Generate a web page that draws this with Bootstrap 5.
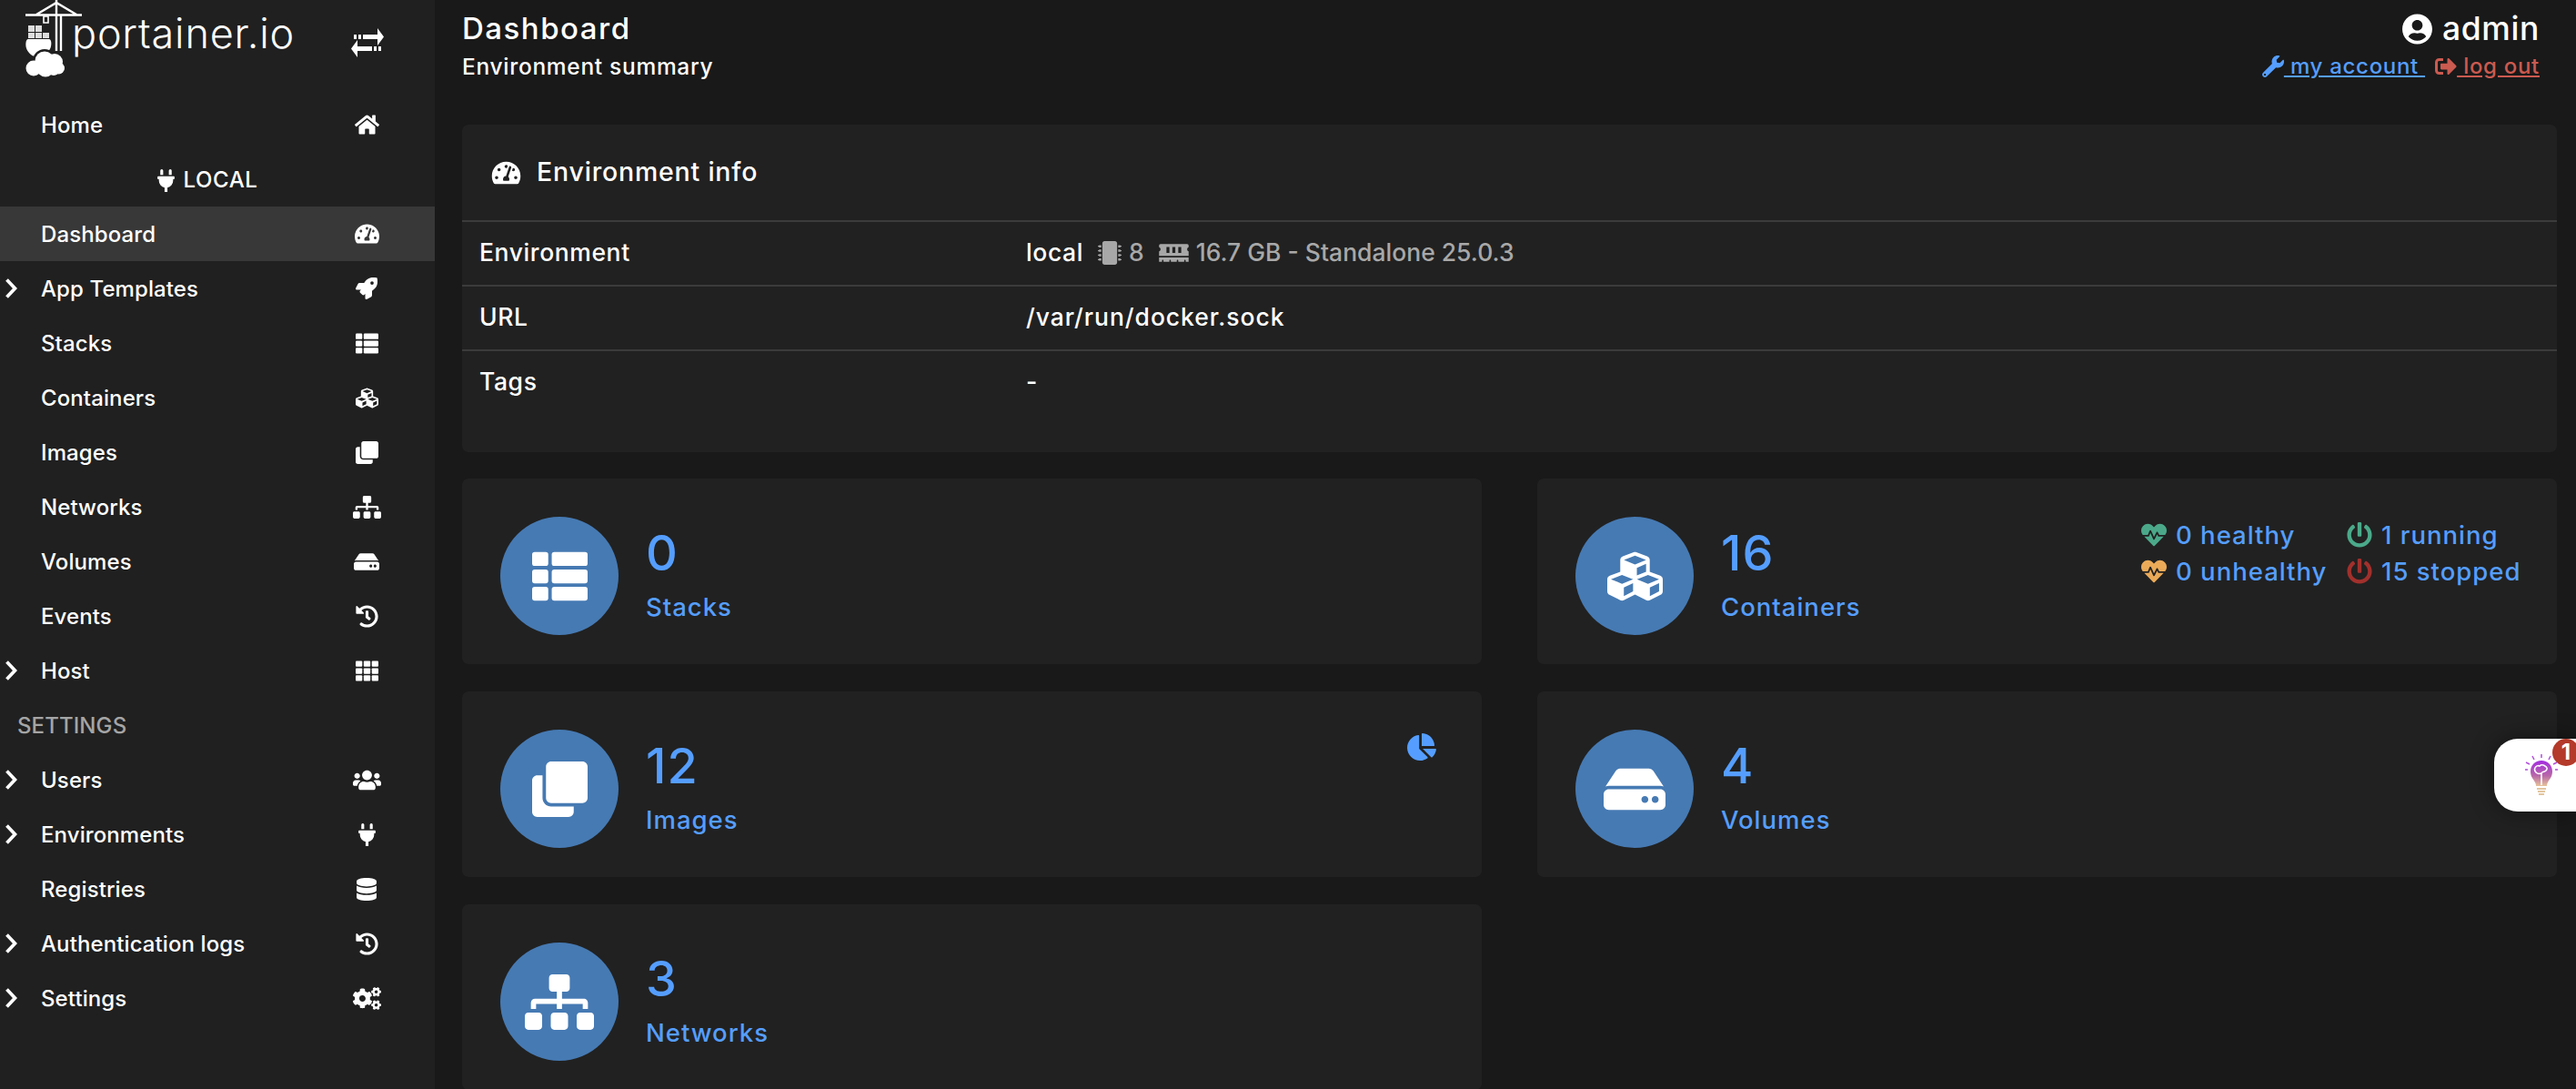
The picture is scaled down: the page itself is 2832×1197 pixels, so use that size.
<!DOCTYPE html>
<html>
<head>
  <meta charset="UTF-8">
  <title>Portainer</title>
  <link href="https://cdn.jsdelivr.net/npm/bootstrap@5.3.1/dist/css/bootstrap.min.css" rel="stylesheet">
  <style>
    html, body { height: 1197px; overflow: hidden; }
    body { background: #191919; color: #fff; font-family: "Inter", "Liberation Sans", sans-serif; font-weight: 500; font-size: 24px; letter-spacing: .6px; }
    svg { fill: currentColor; display: block; }
    .pt-sidebar { width: 478px; height: 1197px; background: #202020; flex: none; letter-spacing: .1px; }
    .pt-logo { height: 107px; }
    .pt-logo-svg { margin-left: 28px; flex: none; }
    .pt-logo-word { font-weight: 300; font-size: 45px; letter-spacing: .8px; color: #fff; line-height: 1; margin-left: -13px; margin-top: 14px; }
    .pt-row { height: 60px; display: flex; align-items: center; position: relative; color: #fff; padding-top: 2px; }
    .pt-row.active { background: #383838; }
    .pt-chev { width: 45px; padding-left: 5px; flex: none; margin-top: -2px; }
    .pt-ico { width: 32px; flex: none; margin-left: auto; margin-right: 59px; margin-top: -2px; display: flex; justify-content: center; }
    .pt-title { justify-content: center; padding-right: 22px; gap: 10px; letter-spacing: .6px; }
    .pt-section { padding-left: 19px; color: #a5a5a5; }
    .pt-main { flex: 1; min-width: 0; padding: 0 21px 0 30px; }
    .pt-head { height: 137px; padding-right: 19px; }
    .pt-h1 { font-size: 33px; line-height: 36px; padding-top: 13px; margin-bottom: 10px; letter-spacing: 1.5px; }
    .pt-sub { font-size: 24.5px; line-height: 28px; letter-spacing: .7px; }
    .pt-user { font-size: 35.5px; line-height: 36px; padding-top: 14px; margin-bottom: 9px; gap: 11px; }
    .pt-links { font-size: 24px; line-height: 28px; gap: 11px; letter-spacing: .7px; }
    .pt-links a { text-decoration: underline; display: flex; align-items: center; }
    .pt-blue { color: #559eff; }
    .pt-red { color: #cb5a50; }
    .pt-panel { background: #212121; border: 0; border-radius: 7px; color: #fff; }
    .pt-env { height: 360px; margin-bottom: 29px; }
    .pt-env-head { height: 105px; padding-left: 32px; font-size: 28.5px; letter-spacing: .8px; gap: 17px; }
    .pt-env-table { margin: 0; --bs-table-bg: transparent; --bs-table-color: #fff; border-color: #3b3b3b; font-size: 26.5px; }
    .pt-env-table td { height: 71px; padding: 0 0 2px 19px; vertical-align: middle; border-top: 2px solid #3b3b3b; border-bottom: 0; font-weight: 500; }
    .pt-env-table td:first-child { width: 601px; }
    .pt-url { letter-spacing: .95px; }
    .pt-muted { color: #a8a8a8; letter-spacing: 0; }
    .pt-grid { display: grid; grid-template-columns: 1121px 1121px; column-gap: 61px; row-gap: 30px; }
    .pt-stat { height: 204px; padding: 42px 0 0 42px; position: relative; }
    .pt-circle { width: 130px; height: 130px; border-radius: 50%; background: #467ab3; color: #fff; flex: none; }
    .pt-stat-text { margin-left: 30px; color: #559eff; }
    .pt-num { font-size: 54px; line-height: 60px; margin-top: 10px; margin-bottom: 12px; letter-spacing: 1px; }
    .pt-label { font-size: 27.5px; line-height: 34px; letter-spacing: 1px; }
    .pt-status { position: absolute; top: 42px; left: 664px; display: grid; grid-template-columns: 226px auto; font-size: 27.5px; line-height: 40px; color: #559eff; letter-spacing: 1px; }
    .pt-status > div { display: flex; align-items: center; gap: 10px; }
    .pt-green { color: #4ba98a; }
    .pt-orange { color: #eaaa58; }
    .pt-dark-red { color: #a1302c; }
    .pt-pie { position: absolute; top: 46px; right: 50px; color: #559eff; }
    .pt-tip { position: absolute; left: 2742px; top: 812px; width: 90px; height: 80px; background: #fff; border-radius: 26px 0 0 26px; box-shadow: 0 0 26px rgba(0,0,0,.45); }
    .pt-tip-bulb { position: absolute; left: 34px; top: 17px; }
    .pt-tip-badge { position: absolute; left: 64px; top: 0; width: 30px; height: 30px; border-radius: 50%; background: #b43a2a; color: #fff; font-size: 24px; font-weight: 700; line-height: 30px; text-align: center; letter-spacing: 0; }
  </style>
</head>
<body class="d-flex">
  <svg width="0" height="0" class="position-absolute">
    <symbol id="i-home" viewBox="0 0 576 512"><path d="M280.37 148.26L96 300.11V464a16 16 0 0 0 16 16l112.06-.29a16 16 0 0 0 15.92-16V368a16 16 0 0 1 16-16h64a16 16 0 0 1 16 16v95.64a16 16 0 0 0 16 16.05L464 480a16 16 0 0 0 16-16V300L295.67 148.26a12.19 12.19 0 0 0-15.3 0zM571.6 251.47L488 182.56V44.05a12 12 0 0 0-12-12h-56a12 12 0 0 0-12 12v72.61L318.47 43a48 48 0 0 0-61 0L4.34 251.47a12 12 0 0 0-1.6 16.9l25.5 31A12 12 0 0 0 45.15 301l235.22-193.74a12.19 12.19 0 0 1 15.3 0L530.9 301a12 12 0 0 0 16.9-1.6l25.5-31a12 12 0 0 0-1.7-16.93z"/></symbol>
    <symbol id="i-gauge" viewBox="0 0 576 512"><path d="M288 32C128.94 32 0 160.94 0 320c0 52.8 14.25 102.26 39.06 144.8 5.61 9.62 16.3 15.2 27.44 15.2h443c11.14 0 21.83-5.58 27.44-15.2C561.75 422.26 576 372.8 576 320c0-159.06-128.94-288-288-288zm0 64c14.71 0 26.58 10.13 30.32 23.65-1.11 2.26-2.64 4.23-3.45 6.67l-9.22 27.67c-5.13 3.49-10.97 6.01-17.64 6.01-17.67 0-32-14.33-32-32S270.33 96 288 96zM96 384c-17.67 0-32-14.33-32-32s14.33-32 32-32 32 14.33 32 32-14.33 32-32 32zm48-160c-17.67 0-32-14.33-32-32s14.33-32 32-32 32 14.33 32 32-14.33 32-32 32zm246.77-72.41l-61.33 184C343.13 347.33 352 364.54 352 384c0 11.72-3.38 22.55-8.88 32H232.88c-5.5-9.45-8.88-20.28-8.88-32 0-33.94 26.5-61.43 59.9-63.59l61.34-184.01c4.17-12.56 17.73-19.45 30.36-15.17 12.57 4.19 19.35 17.79 15.17 30.36zm14.66 57.2l15.52-46.55c3.47-1.29 7.13-2.23 11.05-2.23 17.67 0 32 14.33 32 32s-14.33 32-32 32c-11.38-.01-20.89-6.28-26.57-15.22zM480 384c-17.67 0-32-14.33-32-32s14.33-32 32-32 32 14.33 32 32-14.33 32-32 32z"/></symbol>
    <symbol id="i-rocket" viewBox="0 0 512 512"><path d="M505.12019,19.09375c-1.18945-5.53125-6.65819-11-12.207-12.1875C460.716,0,435.507,0,410.40747,0,307.17523,0,245.26909,55.20312,199.05238,128H94.83772c-16.34763.01562-35.55658,11.875-42.88664,26.48438L2.51562,253.29688A28.4,28.4,0,0,0,0,264a24.00867,24.00867,0,0,0,24.00582,24H127.81618l-22.47457,22.46875c-11.36521,11.36133-12.99607,32.25781,0,45.25L156.24582,406.625c11.15623,11.1875,32.15619,13.15625,45.27726,0l22.47457-22.46875V488a24.00867,24.00867,0,0,0,24.00581,24,28.55934,28.55934,0,0,0,10.707-2.51562l98.72834-49.39063c14.62888-7.29687,26.50776-26.5,26.50776-42.85937V312.79688c72.59753-46.3125,128.03493-108.40626,128.03493-211.09376C512.07526,76.5,512.07526,51.29688,505.12019,19.09375ZM384.04033,168A40,40,0,1,1,424.05,128,40.02322,40.02322,0,0,1,384.04033,168Z"/></symbol>
    <symbol id="i-list" viewBox="0 0 512 512"><rect y="32" width="149" height="128" rx="24"/><rect y="192" width="149" height="128" rx="24"/><rect y="352" width="149" height="128" rx="24"/><rect x="181" y="32" width="331" height="128" rx="24"/><rect x="181" y="192" width="331" height="128" rx="24"/><rect x="181" y="352" width="331" height="128" rx="24"/></symbol>
    <symbol id="i-cubes" viewBox="0 0 512 512"><path d="M488.6 250.2L392 214V105.5c0-15-9.3-28.4-23.4-33.7l-100-37.5c-8.1-3.1-17.1-3.1-25.3 0l-100 37.5c-14.1 5.3-23.4 18.7-23.4 33.7V214l-96.6 36.2C9.3 255.5 0 268.9 0 283.9V394c0 13.6 7.7 26.1 19.9 32.2l100 50c10.1 5.1 22.1 5.1 32.2 0l103.9-52 103.9 52c10.1 5.1 22.1 5.1 32.2 0l100-50c12.2-6.1 19.9-18.6 19.9-32.2V283.9c0-15-9.3-28.4-23.4-33.7zM358 214.8l-85 31.9v-68.2l85-37v73.3zM154 104.1l102-38.2 102 38.2v.6l-102 41.4-102-41.4v-.6zm84 291.1l-85 42.5v-79.1l85-38.8v75.4zm0-112l-102 41.4-102-41.4v-.6l102-38.2 102 38.2v.6zm240 112l-85 42.5v-79.1l85-38.8v75.4zm0-112l-102 41.4-102-41.4v-.6l102-38.2 102 38.2v.6z"/></symbol>
    <symbol id="i-clone" viewBox="0 0 512 512"><path d="M464 0c26.51 0 48 21.49 48 48v288c0 26.51-21.49 48-48 48H176c-26.51 0-48-21.49-48-48V48c0-26.51 21.49-48 48-48h288M176 416c-44.112 0-80-35.888-80-80V128H48c-26.51 0-48 21.49-48 48v288c0 26.51 21.49 48 48 48h288c26.51 0 48-21.49 48-48v-48H176z"/></symbol>
    <symbol id="i-sitemap" viewBox="0 0 640 512"><path d="M128 352H32c-17.67 0-32 14.33-32 32v96c0 17.67 14.33 32 32 32h96c17.67 0 32-14.33 32-32v-96c0-17.67-14.33-32-32-32zm-24-80h192v48h48v-48h192v48h48v-57.59c0-21.17-17.23-38.41-38.41-38.41H344v-64h40c17.67 0 32-14.33 32-32V32c0-17.67-14.33-32-32-32H256c-17.67 0-32 14.33-32 32v96c0 17.67 14.33 32 32 32h40v64H94.41C73.23 224 56 241.23 56 262.41V320h48v-48zm264 80h-96c-17.67 0-32 14.33-32 32v96c0 17.67 14.33 32 32 32h96c17.67 0 32-14.33 32-32v-96c0-17.67-14.33-32-32-32zm240 0h-96c-17.67 0-32 14.33-32 32v96c0 17.67 14.33 32 32 32h96c17.67 0 32-14.33 32-32v-96c0-17.67-14.33-32-32-32z"/></symbol>
    <symbol id="i-hdd" viewBox="0 0 576 512"><path d="M576 304v96c0 26.51-21.49 48-48 48H48c-26.51 0-48-21.49-48-48v-96c0-26.51 21.49-48 48-48h480c26.51 0 48 21.49 48 48zm-48-80a79.557 79.557 0 0 1 30.777 6.165L462.25 85.374A48.003 48.003 0 0 0 422.311 64H153.689a48 48 0 0 0-39.938 21.374L17.223 230.165A79.557 79.557 0 0 1 48 224h480zm-48 96c-17.673 0-32 14.327-32 32s14.327 32 32 32 32-14.327 32-32-14.327-32-32-32zm-96 0c-17.673 0-32 14.327-32 32s14.327 32 32 32 32-14.327 32-32-14.327-32-32-32z"/></symbol>
    <symbol id="i-history" viewBox="0 0 512 512"><path d="M504 255.531c.253 136.64-111.18 248.372-247.82 248.468-59.015.042-113.223-20.53-155.822-54.911-11.077-8.94-11.905-25.541-1.839-35.607l11.267-11.267c8.609-8.609 22.353-9.551 31.891-1.984C173.062 425.135 212.781 440 256 440c101.705 0 184-82.311 184-184 0-101.705-82.311-184-184-184-48.814 0-93.149 18.969-126.068 49.932l50.754 50.754c10.08 10.08 2.941 27.314-11.313 27.314H24c-8.837 0-16-7.163-16-16V38.627c0-14.254 17.234-21.393 27.314-11.314l49.372 49.372C129.209 34.136 189.552 8 256 8c136.81 0 247.747 110.78 248 247.531zm-180.912 78.784l9.823-12.63c8.138-10.463 6.253-25.542-4.21-33.679L288 256.349V152c0-13.255-10.745-24-24-24h-16c-13.255 0-24 10.745-24 24v135.651l65.409 50.874c10.463 8.137 25.541 6.253 33.679-4.21z"/></symbol>
    <symbol id="i-th" viewBox="0 0 512 512"><rect y="32" width="149" height="128" rx="20"/><rect x="181" y="32" width="150" height="128" rx="20"/><rect x="363" y="32" width="149" height="128" rx="20"/><rect y="192" width="149" height="128" rx="20"/><rect x="181" y="192" width="150" height="128" rx="20"/><rect x="363" y="192" width="149" height="128" rx="20"/><rect y="352" width="149" height="128" rx="20"/><rect x="181" y="352" width="150" height="128" rx="20"/><rect x="363" y="352" width="149" height="128" rx="20"/></symbol>
    <symbol id="i-users" viewBox="0 0 640 512"><path d="M96 224c35.3 0 64-28.7 64-64s-28.7-64-64-64-64 28.7-64 64 28.7 64 64 64zm448 0c35.3 0 64-28.7 64-64s-28.7-64-64-64-64 28.7-64 64 28.7 64 64 64zm32 32h-64c-17.6 0-33.5 7.1-45.1 18.6 40.3 22.1 68.9 62 75.1 109.4h66c17.7 0 32-14.3 32-32v-32c0-35.3-28.7-64-64-64zm-256 0c61.9 0 112-50.1 112-112S381.9 32 320 32 208 82.1 208 144s50.1 112 112 112zm76.8 32h-8.3c-20.8 10-43.9 16-68.5 16s-47.6-6-68.5-16h-8.3C179.6 288 128 339.6 128 403.2V432c0 26.5 21.5 48 48 48h288c26.5 0 48-21.5 48-48v-28.8c0-63.6-51.6-115.2-115.2-115.2zm-223.7-13.4C161.5 263.1 145.6 256 128 256H64c-35.3 0-64 28.7-64 64v32c0 17.7 14.3 32 32 32h65.9c6.3-47.4 34.9-87.3 75.2-109.4z"/></symbol>
    <symbol id="i-plug" viewBox="0 0 384 512"><path d="M320,32a32,32,0,0,0-64,0v96h64Zm48,128H16A16,16,0,0,0,0,176v32a16,16,0,0,0,16,16H32v32A160.07,160.07,0,0,0,160,412.8V512h64V412.8A160.07,160.07,0,0,0,352,256V224h16a16,16,0,0,0,16-16V176A16,16,0,0,0,368,160ZM128,32a32,32,0,0,0-64,0v96h64Z"/></symbol>
    <symbol id="i-db" viewBox="0 0 448 512"><path d="M448 73.143v45.714C448 159.143 347.667 192 224 192S0 159.143 0 118.857V73.143C0 32.857 100.333 0 224 0s224 32.857 224 73.143zM448 176v102.857C448 319.143 347.667 352 224 352S0 319.143 0 278.857V176c48.125 33.143 136.208 48.572 224 48.572S399.874 209.143 448 176zm0 160v102.857C448 479.143 347.667 512 224 512S0 479.143 0 438.857V336c48.125 33.143 136.208 48.572 224 48.572S399.874 369.143 448 336z"/></symbol>
    <symbol id="i-cogs" viewBox="0 0 640 512"><path d="M512.1 191l-8.2 14.3c-3 5.3-9.4 7.5-15.1 5.4-11.8-4.4-22.6-10.7-32.1-18.6-4.6-3.8-5.8-10.5-2.8-15.7l8.2-14.3c-6.9-8-12.3-17.3-15.9-27.4h-16.5c-6 0-11.2-4.3-12.2-10.3-2-12-2.1-24.6 0-37.1 1-6 6.2-10.4 12.2-10.4h16.5c3.6-10.1 9-19.4 15.9-27.4l-8.2-14.3c-3-5.2-1.9-11.9 2.8-15.7 9.5-7.9 20.4-14.2 32.1-18.6 5.7-2.1 12.1.1 15.1 5.4l8.2 14.3c10.5-1.9 21.2-1.9 31.7 0L552 6.3c3-5.3 9.4-7.5 15.1-5.4 11.8 4.4 22.6 10.7 32.1 18.6 4.6 3.8 5.8 10.5 2.8 15.7l-8.2 14.3c6.9 8 12.3 17.3 15.9 27.4h16.5c6 0 11.2 4.3 12.2 10.3 2 12 2.1 24.6 0 37.1-1 6-6.2 10.4-12.2 10.4h-16.5c-3.6 10.1-9 19.4-15.9 27.4l8.2 14.3c3 5.2 1.9 11.9-2.8 15.7-9.5 7.9-20.4 14.2-32.1 18.6-5.7 2.1-12.1-.1-15.1-5.4l-8.2-14.3c-10.4 1.9-21.2 1.9-31.7 0zm-10.5-58.8c38.5 29.6 82.4-14.3 52.8-52.8-38.5-29.7-82.4 14.3-52.8 52.8zM386.3 286.1l33.7 16.8c10.1 5.8 14.5 18.1 10.5 29.1-8.9 24.2-26.4 46.4-42.6 65.8-7.4 8.9-20.2 11.1-30.3 5.3l-29.1-16.8c-16 13.7-34.6 24.6-54.9 31.7v33.6c0 11.6-8.3 21.6-19.7 23.6-24.6 4.2-50.4 4.4-75.9 0-11.5-2-20-11.9-20-23.6V418c-20.3-7.2-38.9-18-54.9-31.7L74 403c-10 5.8-22.9 3.6-30.3-5.3-16.2-19.4-33.3-41.6-42.2-65.7-4-10.9.4-23.2 10.5-29.1l33.3-16.8c-3.9-20.9-3.9-42.4 0-63.4L12 205.8c-10.1-5.8-14.6-18.1-10.5-29 8.9-24.2 26-46.4 42.2-65.8 7.4-8.9 20.2-11.1 30.3-5.3l29.1 16.8c16-13.7 34.6-24.6 54.9-31.7V57.1c0-11.5 8.2-21.5 19.6-23.5 24.6-4.2 50.5-4.4 76-.1 11.5 2 20 11.9 20 23.6v33.6c20.3 7.2 38.9 18 54.9 31.7l29.1-16.8c10-5.8 22.9-3.6 30.3 5.3 16.2 19.4 33.2 41.6 42.1 65.8 4 10.9.1 23.2-10 29.1l-33.7 16.8c3.9 21 3.9 42.5 0 63.5zm-117.6 21.1c59.2-77-28.7-164.9-105.7-105.7-59.2 77 28.7 164.9 105.7 105.7zm243.4 182.7l-8.2 14.3c-3 5.3-9.4 7.5-15.1 5.4-11.8-4.4-22.6-10.7-32.1-18.6-4.6-3.8-5.8-10.5-2.8-15.7l8.2-14.3c-6.9-8-12.3-17.3-15.9-27.4h-16.5c-6 0-11.2-4.3-12.2-10.3-2-12-2.1-24.6 0-37.1 1-6 6.2-10.4 12.2-10.4h16.5c3.6-10.1 9-19.4 15.9-27.4l-8.2-14.3c-3-5.2-1.9-11.9 2.8-15.7 9.5-7.9 20.4-14.2 32.1-18.6 5.7-2.1 12.1.1 15.1 5.4l8.2 14.3c10.5-1.9 21.2-1.9 31.7 0l8.2-14.3c3-5.3 9.4-7.5 15.1-5.4 11.8 4.4 22.6 10.7 32.1 18.6 4.6 3.8 5.8 10.5 2.8 15.7l-8.2 14.3c6.9 8 12.3 17.3 15.9 27.4h16.5c6 0 11.2 4.3 12.2 10.3 2 12 2.1 24.6 0 37.1-1 6-6.2 10.4-12.2 10.4h-16.5c-3.6 10.1-9 19.4-15.9 27.4l8.2 14.3c3 5.2 1.9 11.9-2.8 15.7-9.5 7.9-20.4 14.2-32.1 18.6-5.7 2.1-12.1-.1-15.1-5.4l-8.2-14.3c-10.4 1.9-21.2 1.9-31.7 0zM501.6 431c38.5 29.6 82.4-14.3 52.8-52.8-38.5-29.6-82.4 14.3-52.8 52.8z"/></symbol>
    <symbol id="i-chev" viewBox="0 0 14 24"><path d="M2.5 2.5 L11.5 12 L2.5 21.5" fill="none" stroke="currentColor" stroke-width="3.8"/></symbol>
    <symbol id="i-heart" viewBox="0 0 512 512"><path d="M320.2 243.8l-49.7 99.4c-6 12.1-23.4 11.7-28.9-.6l-56.9-126.3-30 71.7H60.6l182.5 186.5c7.1 7.3 18.6 7.3 25.7 0L451.4 288H342.3l-22.1-44.2zM473.7 73.9l-2.4-2.5c-51.5-52.6-135.8-52.6-187.4 0L256 100l-27.9-28.5c-51.5-52.7-135.9-52.7-187.4 0l-2.4 2.4C-10.4 123.7-12.5 203 31 256h102.4l35.9-86.2c5.4-12.9 23.6-13.2 29.4-.4l58.2 129.3 49-97.9c5.9-11.8 22.7-11.8 28.6 0l27.6 55.2H481c43.5-53 41.4-132.3-7.3-182.1z"/></symbol>
    <symbol id="i-power" viewBox="0 0 512 512"><path d="M400 54.1c63 45 104 118.6 104 201.9 0 136.8-110.8 247.7-247.5 248C120 504.3 8.2 393 8 256.4 7.9 173.1 48.9 99.3 111.8 54.2c11.7-8.3 28-4.8 35 7.7L162.6 90c5.9 10.5 3.1 23.8-6.6 31-41.5 30.8-68 79.6-68 134.9-.1 92.3 74.5 168.1 168 168.1 91.6 0 168.6-74.2 168-169.1-.3-51.8-24.7-101.8-68.1-134-9.7-7.2-12.4-20.5-6.5-30.9l15.8-28.1c7-12.4 23.2-16.1 34.8-7.8zM296 264V24c0-13.3-10.7-24-24-24h-32c-13.3 0-24 10.7-24 24v240c0 13.3 10.7 24 24 24h32c13.3 0 24-10.7 24-24z"/></symbol>
    <symbol id="i-pie" viewBox="0 0 544 512"><path d="M527.79 288H290.5l158.03 158.03c6.04 6.04 15.98 6.53 22.19.68 38.7-36.46 65.32-85.61 73.13-140.86 1.34-9.46-6.51-17.85-16.06-17.85zm-15.83-64.8C503.72 103.74 408.26 8.28 288.8.04 279.68-.59 272 7.1 272 16.24V240h223.77c9.14 0 16.82-7.68 16.19-16.8zM224 288V50.71c0-9.55-8.39-17.4-17.84-16.06C86.99 51.49-4.1 155.6.14 280.37 4.5 408.51 114.83 513.59 243.03 511.98c50.4-.63 96.97-16.87 135.26-44.03 7.9-5.6 8.42-17.23 1.57-24.08L224 288z"/></symbol>
    <symbol id="i-wrench" viewBox="0 0 512 512"><path d="M507.73 109.1c-2.24-9.03-13.54-12.09-20.12-5.51l-74.36 74.36-67.88-11.31-11.31-67.88 74.36-74.36c6.62-6.62 3.43-17.9-5.66-20.16-47.38-11.74-99.55.91-136.58 37.93-39.64 39.64-50.55 97.1-34.05 147.2L18.74 402.76c-24.99 24.99-24.99 65.51 0 90.5 24.99 24.99 65.51 24.99 90.5 0l213.21-213.21c50.12 16.71 107.47 5.68 147.37-34.22 37.07-37.07 49.7-89.32 37.91-136.73zM64 472c-13.25 0-24-10.75-24-24 0-13.26 10.75-24 24-24s24 10.74 24 24c0 13.25-10.75 24-24 24z"/></symbol>
    <symbol id="i-user" viewBox="0 0 496 512"><path d="M248 8C111 8 0 119 0 256s111 248 248 248 248-111 248-248S385 8 248 8zm0 96c48.6 0 88 39.4 88 88s-39.4 88-88 88-88-39.4-88-88 39.4-88 88-88zm0 344c-58.7 0-111.3-26.6-146.5-68.2 18.8-35.4 55.6-59.8 98.5-59.8 2.4 0 4.8.4 7.1 1.1 13 4.2 26.6 6.9 40.9 6.9 14.3 0 28-2.7 40.9-6.9 2.3-.7 4.7-1.1 7.1-1.1 42.9 0 79.7 24.4 98.5 59.8C359.3 421.4 306.7 448 248 448z"/></symbol>
    <symbol id="i-out" viewBox="0 0 512 512"><path d="M497 273L329 441c-15 15-41 4.5-41-17v-96H152c-13.3 0-24-10.7-24-24v-96c0-13.3 10.7-24 24-24h136V88c0-21.4 25.9-32 41-17l168 168c9.3 9.4 9.3 24.6 0 34zM192 436v-40c0-6.6-5.4-12-12-12H96c-17.7 0-32-14.3-32-32V160c0-17.7 14.3-32 32-32h84c6.6 0 12-5.4 12-12V76c0-6.6-5.4-12-12-12H96c-53 0-96 43-96 96v192c0 53 43 96 96 96h84c6.6 0 12-5.4 12-12z"/></symbol>
    <symbol id="i-chip" viewBox="0 0 512 512"><path d="M416 48v416c0 26.51-21.49 48-48 48H144c-26.51 0-48-21.49-48-48V48c0-26.51 21.49-48 48-48h224c26.51 0 48 21.49 48 48zm96 58v12a6 6 0 0 1-6 6h-18v6a6 6 0 0 1-6 6h-42V88h42a6 6 0 0 1 6 6v6h18a6 6 0 0 1 6 6zm0 96v12a6 6 0 0 1-6 6h-18v6a6 6 0 0 1-6 6h-42v-48h42a6 6 0 0 1 6 6v6h18a6 6 0 0 1 6 6zm0 96v12a6 6 0 0 1-6 6h-18v6a6 6 0 0 1-6 6h-42v-48h42a6 6 0 0 1 6 6v6h18a6 6 0 0 1 6 6zm0 96v12a6 6 0 0 1-6 6h-18v6a6 6 0 0 1-6 6h-42v-48h42a6 6 0 0 1 6 6v6h18a6 6 0 0 1 6 6zM30 376h42v48H30a6 6 0 0 1-6-6v-6H6a6 6 0 0 1-6-6v-12a6 6 0 0 1 6-6h18v-6a6 6 0 0 1 6-6zm0-96h42v48H30a6 6 0 0 1-6-6v-6H6a6 6 0 0 1-6-6v-12a6 6 0 0 1 6-6h18v-6a6 6 0 0 1 6-6zm0-96h42v48H30a6 6 0 0 1-6-6v-6H6a6 6 0 0 1-6-6v-12a6 6 0 0 1 6-6h18v-6a6 6 0 0 1 6-6zm0-96h42v48H30a6 6 0 0 1-6-6v-6H6a6 6 0 0 1-6-6v-12a6 6 0 0 1 6-6h18v-6a6 6 0 0 1 6-6z"/></symbol>
    <symbol id="i-memory" viewBox="0 0 640 512"><path d="M640 130.94V96c0-17.67-14.33-32-32-32H32C14.33 64 0 78.33 0 96v34.94c18.6 6.61 32 24.19 32 45.06s-13.4 38.45-32 45.06V320h640v-98.94c-18.6-6.61-32-24.19-32-45.06s13.4-38.45 32-45.06zM224 256h-64V128h64v128zm128 0h-64V128h64v128zm128 0h-64V128h64v128zM0 448h64v-26.67c0-8.84 7.16-16 16-16s16 7.16 16 16V448h128v-26.67c0-8.84 7.16-16 16-16s16 7.16 16 16V448h128v-26.67c0-8.84 7.16-16 16-16s16 7.16 16 16V448h128v-26.67c0-8.84 7.16-16 16-16s16 7.16 16 16V448h64v-96H0v96z"/></symbol>
  </svg>

  <div class="pt-sidebar">
    <div class="pt-logo d-flex align-items-start position-relative">
      <svg class="pt-logo-svg" width="64" height="86" viewBox="0 0 64 86">
        <path d="M0 16.500H62M12 16L34 3L56 16M34 0V56M39 17V56" fill="none" stroke="#fff" stroke-width="2.400"/>
        <path d="M3 28h7v7H3zM11 28h7v7h-7zM3 36h7v6H3zM11 36h7v6h-7zM19 36h7v6h-7z" fill="#ddd"/>
        <path d="M20 18h5v7h-5z" fill="none" stroke="#fff" stroke-width="1.600"/>
        <path d="M3 43h23c2 0 3 4 2 8 -1 5-5 7-9 7 -3 0-6 3-8 4 -4 0-9-5-10-9 -1-3-1-10 2-10z" fill="#fff"/>
        <g fill="#202020"><circle cx="10" cy="75" r="11"/><circle cx="21" cy="67" r="13"/><circle cx="33" cy="68" r="11"/></g>
        <g fill="#fff"><circle cx="9" cy="75" r="8.500"/><circle cx="21" cy="67" r="10.500"/><circle cx="32" cy="68" r="9"/><circle cx="36.500" cy="75" r="6.500"/><circle cx="22" cy="75" r="9.500"/><circle cx="31" cy="77" r="6"/></g>
      </svg>
      <span class="pt-logo-word">portainer.io</span>
      <span class="position-absolute" style="left:386px;top:31px">
        <svg width="36" height="32" viewBox="0 0 36 32"><path d="M3 7h3v5H3zM8 7h3v5H8zM13 7h16V0l7 9.500-7 9.500v-7H13z"/><path d="M33 20h-3v5h3zM28 20h-3v5h3zM23 20H7v-7L0 22.500 7 32v-7h16z"/></svg>
      </span>
    </div>

    <div class="pt-row"><span class="pt-chev"></span>Home<span class="pt-ico"><svg width="27" height="24"><use href="#i-home"/></svg></span></div>
    <div class="pt-row pt-title"><svg width="19" height="25"><use href="#i-plug"/></svg>LOCAL</div>
    <div class="pt-row active"><span class="pt-chev"></span>Dashboard<span class="pt-ico"><svg width="27" height="24"><use href="#i-gauge"/></svg></span></div>
    <div class="pt-row"><span class="pt-chev"><svg width="14" height="24"><use href="#i-chev"/></svg></span>App Templates<span class="pt-ico"><svg width="24" height="24"><use href="#i-rocket"/></svg></span></div>
    <div class="pt-row"><span class="pt-chev"></span>Stacks<span class="pt-ico"><svg width="25" height="25"><use href="#i-list"/></svg></span></div>
    <div class="pt-row"><span class="pt-chev"></span>Containers<span class="pt-ico"><svg width="25" height="25"><use href="#i-cubes"/></svg></span></div>
    <div class="pt-row"><span class="pt-chev"></span>Images<span class="pt-ico"><svg width="25" height="25"><use href="#i-clone"/></svg></span></div>
    <div class="pt-row"><span class="pt-chev"></span>Networks<span class="pt-ico"><svg width="31" height="25"><use href="#i-sitemap"/></svg></span></div>
    <div class="pt-row"><span class="pt-chev"></span>Volumes<span class="pt-ico"><svg width="28" height="25"><use href="#i-hdd"/></svg></span></div>
    <div class="pt-row"><span class="pt-chev"></span>Events<span class="pt-ico"><svg width="25" height="25"><use href="#i-history"/></svg></span></div>
    <div class="pt-row"><span class="pt-chev"><svg width="14" height="24"><use href="#i-chev"/></svg></span>Host<span class="pt-ico"><svg width="25" height="25"><use href="#i-th"/></svg></span></div>
    <div class="pt-row pt-section">SETTINGS</div>
    <div class="pt-row"><span class="pt-chev"><svg width="14" height="24"><use href="#i-chev"/></svg></span>Users<span class="pt-ico"><svg width="31" height="25"><use href="#i-users"/></svg></span></div>
    <div class="pt-row"><span class="pt-chev"><svg width="14" height="24"><use href="#i-chev"/></svg></span>Environments<span class="pt-ico"><svg width="19" height="25"><use href="#i-plug"/></svg></span></div>
    <div class="pt-row"><span class="pt-chev"></span>Registries<span class="pt-ico"><svg width="22" height="25"><use href="#i-db"/></svg></span></div>
    <div class="pt-row"><span class="pt-chev"><svg width="14" height="24"><use href="#i-chev"/></svg></span>Authentication logs<span class="pt-ico"><svg width="25" height="25"><use href="#i-history"/></svg></span></div>
    <div class="pt-row"><span class="pt-chev"><svg width="14" height="24"><use href="#i-chev"/></svg></span>Settings<span class="pt-ico"><svg width="31" height="25"><use href="#i-cogs"/></svg></span></div>
  </div>

  <div class="pt-main">
    <div class="pt-head d-flex justify-content-between">
      <div>
        <div class="pt-h1">Dashboard</div>
        <div class="pt-sub">Environment summary</div>
      </div>
      <div>
        <div class="pt-user d-flex justify-content-end align-items-center"><svg width="33" height="34"><use href="#i-user"/></svg>admin</div>
        <div class="pt-links d-flex justify-content-end">
          <a href="#" class="pt-blue"><svg width="24" height="24"><use href="#i-wrench"/></svg>&nbsp;my account&nbsp;</a>
          <a href="#" class="pt-red"><svg width="24" height="24"><use href="#i-out"/></svg>&nbsp;log out</a>
        </div>
      </div>
    </div>

    <div class="pt-panel pt-env card">
      <div class="pt-env-head d-flex align-items-center"><svg width="33" height="28"><use href="#i-gauge"/></svg>Environment info</div>
      <table class="table pt-env-table">
        <tr>
          <td>Environment</td>
          <td><div class="d-flex align-items-center">local<svg class="pt-muted ms-3 me-2" width="26" height="26"><use href="#i-chip"/></svg><span class="pt-muted">8</span><svg class="pt-muted ms-3 me-2" width="33" height="26"><use href="#i-memory"/></svg><span class="pt-muted">16.7 GB - Standalone 25.0.3</span></div></td>
        </tr>
        <tr><td>URL</td><td class="pt-url">/var/run/docker.sock</td></tr>
        <tr><td>Tags</td><td>-</td></tr>
      </table>
    </div>

    <div class="pt-grid">
      <div class="pt-panel pt-stat d-flex align-items-start">
        <div class="pt-circle d-flex align-items-center justify-content-center"><svg width="61" height="61"><use href="#i-list"/></svg></div>
        <div class="pt-stat-text"><div class="pt-num">0</div><div class="pt-label">Stacks</div></div>
      </div>
      <div class="pt-panel pt-stat d-flex align-items-start">
        <div class="pt-circle d-flex align-items-center justify-content-center"><svg width="61" height="61"><use href="#i-cubes"/></svg></div>
        <div class="pt-stat-text"><div class="pt-num">16</div><div class="pt-label">Containers</div></div>
        <div class="pt-status">
          <div><svg class="pt-green" width="28" height="28"><use href="#i-heart"/></svg>0 healthy</div>
          <div><svg class="pt-green" width="28" height="28"><use href="#i-power"/></svg>1 running</div>
          <div><svg class="pt-orange" width="28" height="28"><use href="#i-heart"/></svg>0 unhealthy</div>
          <div><svg class="pt-dark-red" width="28" height="28"><use href="#i-power"/></svg>15 stopped</div>
        </div>
      </div>
      <div class="pt-panel pt-stat d-flex align-items-start">
        <div class="pt-circle d-flex align-items-center justify-content-center"><svg width="61" height="61"><use href="#i-clone"/></svg></div>
        <div class="pt-stat-text"><div class="pt-num">12</div><div class="pt-label">Images</div></div>
        <svg class="pt-pie" width="32" height="30"><use href="#i-pie"/></svg>
      </div>
      <div class="pt-panel pt-stat d-flex align-items-start">
        <div class="pt-circle d-flex align-items-center justify-content-center"><svg width="68" height="61"><use href="#i-hdd"/></svg></div>
        <div class="pt-stat-text"><div class="pt-num">4</div><div class="pt-label">Volumes</div></div>
      </div>
      <div class="pt-panel pt-stat d-flex align-items-start">
        <div class="pt-circle d-flex align-items-center justify-content-center"><svg width="76" height="61"><use href="#i-sitemap"/></svg></div>
        <div class="pt-stat-text"><div class="pt-num">3</div><div class="pt-label">Networks</div></div>
      </div>
    </div>
  </div>

  <div class="pt-tip">
    <svg class="pt-tip-bulb" width="36" height="50" viewBox="0 0 36 50">
      <defs><linearGradient id="bulb" x1="0" y1="0" x2="0" y2="1"><stop offset="0" stop-color="#a52ee0"/><stop offset=".6" stop-color="#b868a8"/><stop offset="1" stop-color="#e8c49a"/></linearGradient></defs>
      <path d="M18 7c-7 0-12 5-12 12 0 6 3 8 5 12 1 2 1 3 1 4h12c0-1 0-2 1-4 2-4 5-6 5-12 0-7-5-12-12-12z" fill="url(#bulb)"/>
      <path d="M13 37h10v2H13zM14 40h8v2h-8zM15 43h6v2h-6z" fill="#e3c6a0"/>
      <path d="M18 34V21c0-2 3-1 5-3 2-2 1-4-1-5-3-2-5-1-6 0-2-1-4 0-5 2-1 2 0 4 1 5s3 2 6 1" fill="none" stroke="#fff" stroke-width="1.600"/>
      <path d="M18 0v4M8 2l2 4M28 2l-2 4M1 9l4 2M35 9l-4 2M0 17h3M33 17h3" fill="none" stroke="#b24fdc" stroke-width="1.500"/>
    </svg>
    <div class="pt-tip-badge">1</div>
  </div>

  <script src="https://cdn.jsdelivr.net/npm/bootstrap@5.3.1/dist/js/bootstrap.bundle.min.js"></script>
</body>
</html>
